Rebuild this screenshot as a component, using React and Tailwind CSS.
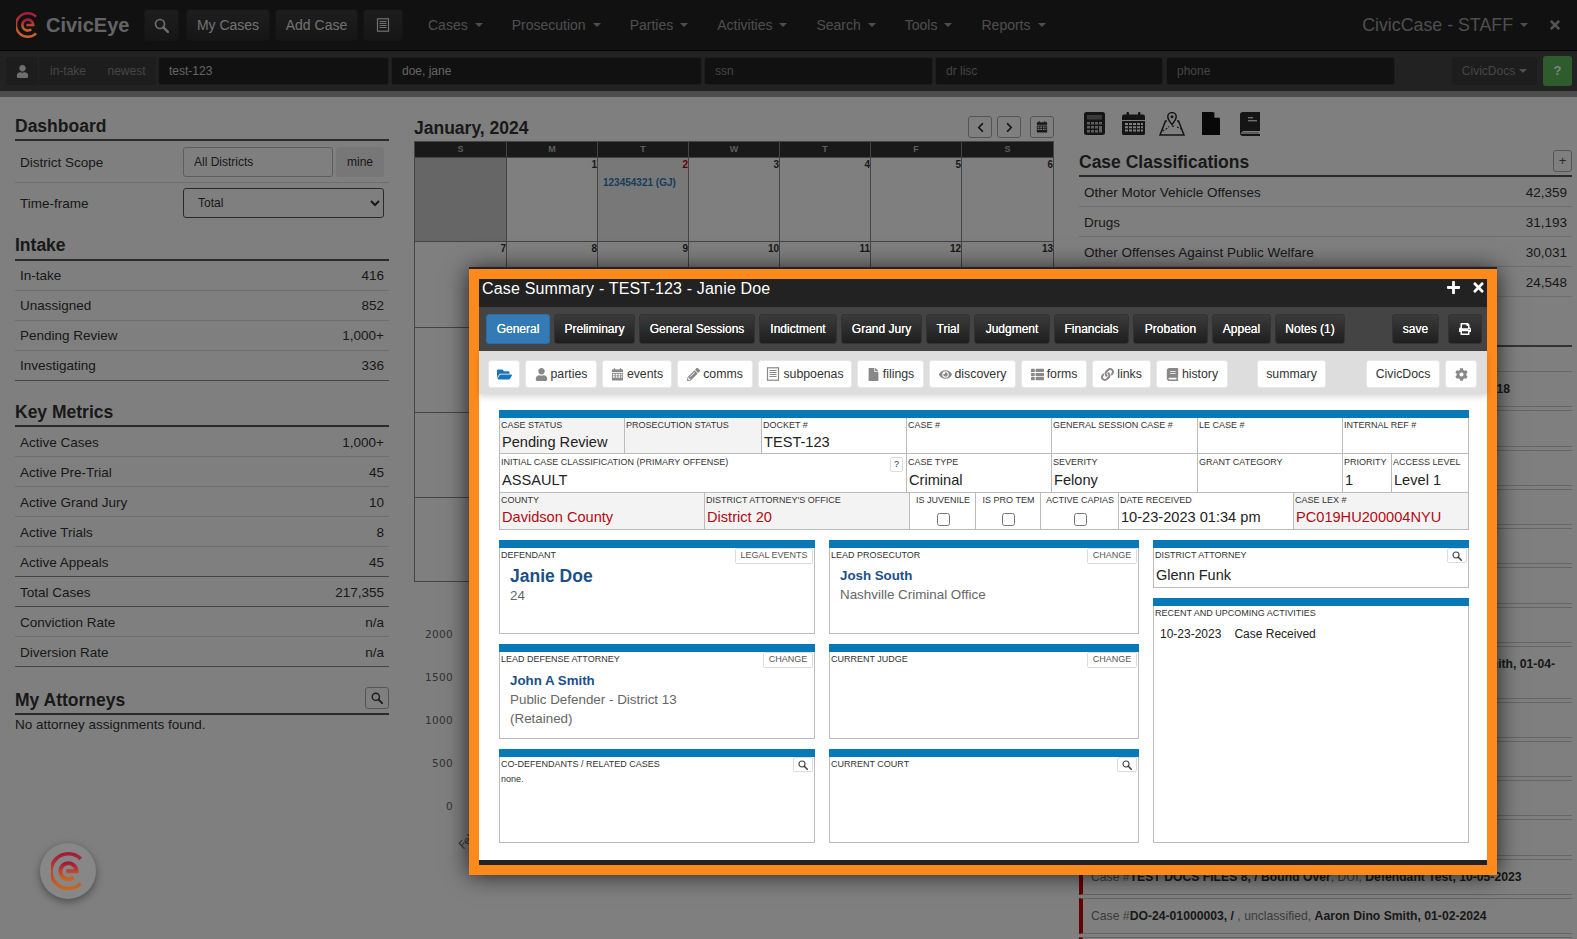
import React from "react";
import { FaUser, FaFolderOpen, FaPencilAlt, FaFile, FaEye, FaThList, FaLink, FaBook, FaCog, FaPrint, FaChevronLeft, FaChevronRight, FaPlus, FaTimes } from "react-icons/fa";

const Search = ({ s = 13, c = "#333" }) => (
  <svg width={s} height={s} viewBox="0 0 14 14" fill="none" stroke={c}>
    <circle cx="5.6" cy="5.6" r="4.2" strokeWidth="1.6" />
    <path d="M8.8 8.8 L13 13" strokeWidth="2.2" strokeLinecap="round" />
  </svg>
);
const ListAlt = ({ s = 14, c = "#888" }) => (
  <svg width={s} height={s} viewBox="0 0 14 14" fill="none" stroke={c}>
    <rect x="1.5" y="0.8" width="11" height="12.4" strokeWidth="1.2" />
    <path d="M3.5 3.5H10.5M3.5 5.5H10.5M3.5 7.5H10.5M3.5 9.5H10.5" strokeWidth="1.1" />
  </svg>
);
const CalSmall = ({ s = 13, c = "#888" }) => (
  <svg width={s} height={s} viewBox="0 0 14 14" fill={c}>
    <rect x="1" y="1.5" width="12" height="3" />
    <rect x="3" y="0.3" width="1.5" height="2" />
    <rect x="9.5" y="0.3" width="1.5" height="2" />
    <path d="M1 5.3H13V13.5H1Z M2 6.3V8H4V6.3Z M5 6.3V8H7V6.3Z M8 6.3V8H10V6.3Z M11 6.3V8H12.2V6.3Z M2 9V10.6H4V9Z M5 9V10.6H7V9Z M8 9V10.6H10V9Z M11 9V10.6H12.2V9Z" fillRule="evenodd" />
  </svg>
);
const Caret = ({ c = "border-t-[#9d9d9d]" }) => (
  <span className={"block w-0 h-0 border-x-4 border-x-transparent border-t-4 " + c} />
);

const Logo = ({ s = 24, id = "lg" }) => (
  <svg className="relative z-[1]" width={s} height={s * 1.13} viewBox="0 0 40 45" fill="none">
    <defs>
      <linearGradient id={id} x1="0" y1="0" x2="0" y2="1">
        <stop offset="0" stopColor="#a01c38" />
        <stop offset="0.5" stopColor="#bd4430" />
        <stop offset="1" stopColor="#c8661f" />
      </linearGradient>
    </defs>
    <path d="M35 8 A20.5 20.5 0 1 0 35 37" stroke={`url(#${id})`} strokeWidth="4.2" />
    <path d="M18 22.5 H30 A9.5 9.5 0 1 0 26.5 30" stroke={`url(#${id})`} strokeWidth="4.6" />
  </svg>
);

const navBtn = "h-8 rounded-[4px] bg-gradient-to-b from-[#3c3c3c] to-[#2c2c2c] border border-[#2a2a2a] flex items-center justify-center text-[14px] text-[#e0e0e0]";

function Header() {
  const items = ["Cases", "Prosecution", "Parties", "Activities", "Search", "Tools", "Reports"];
  return (
    <div className="h-[51px] bg-[#232323] border-b border-black flex items-center pl-4 pr-[15px]">
      <Logo s={23} id="lg1" />
      <span className="ml-[7px] w-[98px] text-[20px] font-bold text-[#c8c8c8] leading-none">CivicEye</span>
      <div className={navBtn + " w-[35px]"}><Search s={15} c="#d8d8d8" /></div>
      <div className={navBtn + " ml-[7px] w-[84px]"}>My Cases</div>
      <div className={navBtn + " ml-[5px] w-[83px]"}>Add Case</div>
      <div className={navBtn + " ml-[5px] w-[40px]"}><ListAlt s={14} c="#dedede" /></div>
      <div className="ml-[25px] flex items-center gap-[29px] text-[14px] text-[#9d9d9d]">
        {items.map((t) => (
          <span key={t} className="flex items-center gap-[7px]">{t}<Caret /></span>
        ))}
      </div>
      <div className="ml-auto flex items-center text-[17.8px] text-[#9d9d9d]">
        <span>CivicCase - STAFF</span>
        <span className="ml-[7px]"><Caret /></span>
        <FaTimes className="ml-[20px] text-[#a8a8a8] text-[14px]" />
      </div>
    </div>
  );
}

function SearchBar() {
  const inp = "h-7 rounded-[3px] bg-[#222] border border-[#3a3a3a] flex items-center pl-[10px] text-[12px]";
  const btn = "h-7 bg-[#3a3a3a] border border-[#3a3a3a] flex items-center justify-center text-[12px] text-[#8d8d8d]";
  return (
    <div className="h-10 bg-[#444] flex items-center pl-[6px] pr-[5px]">
      <div className={btn + " w-8 rounded-[3px]"}><FaUser className="text-[#ddd] text-[13px]" /></div>
      <div className={btn + " ml-[1px] w-[58px]"}>in-take</div>
      <div className={btn + " w-[59px]"}>newest</div>
      <div className={inp + " ml-[2px] w-[231px] text-[#c8c8c8]"}>test-123</div>
      <div className={inp + " ml-[2px] w-[311px] text-[#c8c8c8]"}>doe, jane</div>
      <div className={inp + " ml-[2px] w-[229px] text-[#8a8a8a]"}>ssn</div>
      <div className={inp + " ml-[2px] w-[228px] text-[#8a8a8a]"}>dr lisc</div>
      <div className={inp + " ml-[3px] w-[229px] text-[#8a8a8a]"}>phone</div>
      <div className={btn + " ml-auto w-[85px] rounded-[3px] gap-[4px]"}>CivicDocs<Caret c="border-t-[#a0a0a0]" /></div>
      <div className="ml-[6px] w-[29px] h-[30px] rounded-[3px] bg-[#5cb85c] flex items-center justify-center text-[13px] font-bold text-white">?</div>
    </div>
  );
}

const H = ({ children, right, h, pb = "pb-[3px]" }) => (
  <div className={h + " " + pb + " border-b-2 border-[#555] flex items-end justify-between text-[17.5px] leading-[20px] font-bold text-[#333]"}>
    <span>{children}</span>
    {right}
  </div>
);
const Row = ({ a, b, dark, pt = "pt-[1px]" }) => (
  <div className={"h-[30px] flex items-center justify-between px-[5px] border-b " + pt + " " + (dark ? "border-[#888]" : "border-[#ddd]")}>
    <span>{a}</span><span>{b}</span>
  </div>
);

function LeftCol() {
  const k = "pt-[3px]";
  return (
    <div className="w-[374px] ml-[15px] text-[13.5px] text-[#333]">
      <H h="h-[44px]">Dashboard</H>
      <div className="h-[42px] flex items-center justify-between pl-[5px] pr-[5px] border-b border-[#ddd]">
        <span className="mt-[4px]">District Scope</span>
        <div className="flex gap-[3px] text-[12px]">
          <div className="w-[150px] h-[30px] border border-[#bbb] rounded-[3px] flex items-center pl-[10px]">All Districts</div>
          <div className="w-[48px] h-[30px] bg-[#eee] rounded-[3px] flex items-center justify-center">mine</div>
        </div>
      </div>
      <div className="h-[41px] flex items-start justify-between pl-[5px] pr-[5px] pt-[5px]">
        <span className="leading-[30px] mt-[1px]">Time-frame</span>
        <select className="w-[201px] h-[30px] border border-[#555] rounded-[3px] pl-[10px] text-[12px] bg-white">
          <option>Total</option>
        </select>
      </div>
      <H h="h-[37px]" pb="pb-[4px]">Intake</H>
      <Row a="In-take" b="416" />
      <Row a="Unassigned" b="852" />
      <Row a="Pending Review" b="1,000+" />
      <Row a="Investigating" b="336" dark />
      <H h="h-[46px]">Key Metrics</H>
      <Row pt={k} a="Active Cases" b="1,000+" />
      <Row pt={k} a="Active Pre-Trial" b="45" />
      <Row pt={k} a="Active Grand Jury" b="10" />
      <Row pt={k} a="Active Trials" b="8" />
      <Row pt={k} a="Active Appeals" b="45" dark />
      <Row pt={k} a="Total Cases" b="217,355" dark />
      <Row pt={k} a="Conviction Rate" b="n/a" />
      <Row pt={k} a="Diversion Rate" b="n/a" dark />
      <H h="h-[48px]" right={<div className="w-6 h-[22px] mb-[1px] border border-[#aaa] rounded-[3px] flex items-center justify-center"><Search s={12} /></div>}>My Attorneys</H>
      <div className="leading-[18px] pt-[1px]">No attorney assignments found.</div>
    </div>
  );
}

function Calendar() {
  const days = ["S", "M", "T", "W", "T", "F", "S"];
  const rows = [
    ["", "1", "2", "3", "4", "5", "6"],
    ["7", "8", "9", "10", "11", "12", "13"],
    ["", "", "", "", "", "", ""],
    ["", "", "", "", "", "", ""],
    ["", "", "", "", "", "", ""],
  ];
  const hs = ["h-[84px]", "h-[86px]", "h-[85px]", "h-[85px]", "h-[84px]"];
  const cols = "grid grid-cols-[92px_repeat(6,1fr)]";
  return (
    <div className="w-[640px] ml-[25px] text-[#333]">
      <div className="h-[44px] flex items-end justify-between pb-[3px]">
        <span className="text-[17.5px] font-bold leading-[22px] -mb-[1px]">January, 2024</span>
        <div className="flex gap-[5px] items-center">
          <div className="w-6 h-[22px] border border-[#aaa] rounded-[3px] flex items-center justify-center"><FaChevronLeft className="text-[11px]" /></div>
          <div className="w-6 h-[22px] border border-[#aaa] rounded-[3px] flex items-center justify-center"><FaChevronRight className="text-[11px]" /></div>
          <div className="ml-[4px] w-6 h-[22px] border border-[#aaa] rounded-[3px] flex items-center justify-center"><CalSmall s={12} c="#333" /></div>
        </div>
      </div>
      <div className="border border-[#888] border-b-0">
        <div className={cols + " h-[15px] bg-[#333]"}>
          {days.map((d, i) => (
            <div key={i} className="border-r border-[#888] last:border-r-0 text-center text-[9px] font-bold text-[#bbb] leading-[15px]">{d}</div>
          ))}
        </div>
        {rows.map((r, i) => (
          <div key={i} className={cols + " border-t border-b-0 border-[#888] " + hs[i]}>
            {r.map((d, j) => (
              <div key={j} className={"border-r border-[#888] last:border-r-0 text-right text-[10px] font-bold leading-[14px] " + (i === 0 && j === 0 ? "bg-[#ccc]" : i === 0 && j === 2 ? "bg-[#f0f0f0]" : "")}>
                <span className={i === 0 && j === 2 ? "text-[#c00]" : ""}>{d}</span>
                {i === 0 && j === 2 && <div className="text-left pl-[5px] mt-[4px] text-[10px] text-[#337ab7] whitespace-nowrap">123454321 (GJ)</div>}
              </div>
            ))}
          </div>
        ))}
        <div className="border-t border-[#888]" />
      </div>
      <div className="mt-[31px] w-[39px] text-right text-[10.5px] tracking-[0.3px] text-[#666] leading-[43px] font-['DejaVu_Sans',sans-serif]">
        <div>2000</div><div>1500</div><div>1000</div><div>500</div><div>0</div>
      </div>
      <div className="mt-[6px] ml-[45px] w-4 text-[11px] text-[#666] -rotate-45 font-['DejaVu_Sans',sans-serif]">Feb</div>
    </div>
  );
}

const Cls = ({ a, b }) => (
  <div className="h-[30px] flex items-center justify-between px-[5px] pt-[3px] border-b border-[#ddd]">
    <span>{a}</span><span>{b}</span>
  </div>
);

function TopIcons() {
  const c = "#2a2a2a";
  return (
    <div className="mt-[15px] h-[23px] pl-[5px] flex items-center">
      <svg width="21" height="23" viewBox="0 0 21 23">
        <rect width="21" height="23" rx="2.5" fill={c} />
        <rect x="3" y="3" width="15" height="4.5" fill="#777" />
        <path d="M3 10H6V12.5H3ZM7 10H10V12.5H7ZM11 10H14V12.5H11ZM15 10H18V12.5H15ZM3 14H6V16.5H3ZM7 14H10V16.5H7ZM11 14H14V16.5H11ZM15 14H18V20.5H15ZM3 18H6V20.5H3ZM7 18H10V20.5H7ZM11 18H14V20.5H11Z" fill="#bbb" />
      </svg>
      <svg className="ml-[17px]" width="23" height="23" viewBox="0 0 23 23">
        <path d="M0 4.5Q0 2.5 2 2.5H21Q23 2.5 23 4.5V8H0Z" fill={c} />
        <rect x="4.5" y="0" width="2.5" height="4" rx="1" fill={c} />
        <rect x="16" y="0" width="2.5" height="4" rx="1" fill={c} />
        <path fillRule="evenodd" fill={c} d="M0 9H23V21.5Q23 23 21 23H2Q0 23 0 21.5ZM3 11V13H6V11ZM7 11V13H10V11ZM11 11V13H14V11ZM15 11V13H18V11ZM19 11V13H21V11ZM3 14.3V16.3H6V14.3ZM7 14.3V16.3H10V14.3ZM11 14.3V16.3H14V14.3ZM15 14.3V16.3H18V14.3ZM19 14.3V16.3H21V14.3ZM3 17.6V19.6H6V17.6ZM7 17.6V19.6H10V17.6ZM11 17.6V19.6H14V17.6ZM15 17.6V19.6H18V17.6ZM19 17.6V19.6H21V17.6Z" />
      </svg>
      <svg className="ml-[14px]" width="26" height="24" viewBox="0 0 26 24" fill="none" stroke={c}>
        <path d="M8 9H6.5L1 23H25L19.5 9H18" strokeWidth="1.5" />
        <path d="M3.5 19L8 16.5L10 14.5M13 14.5L16.5 13.5M18 15L22.5 17" strokeWidth="1.2" strokeDasharray="2 1.5" />
        <path d="M13 12.5C13 12.5 8.8 7.5 8.8 4.8A4.2 4.2 0 0 1 17.2 4.8C17.2 7.5 13 12.5 13 12.5Z" strokeWidth="1.5" fill="#fff" />
        <circle cx="13" cy="4.8" r="1.5" fill={c} stroke="none" />
      </svg>
      <svg className="ml-[17px]" width="18" height="23" viewBox="0 0 18 23">
        <path d="M0 0H11L18 7V23H0Z" fill="#111" />
        <path d="M12 0L18 6H12Z" fill="#fff" />
        <path d="M12.2 0.2V6H18" stroke="#111" strokeWidth="0.6" fill="none" />
      </svg>
      <svg className="ml-[20px]" width="20" height="24" viewBox="0 0 20 24">
        <path d="M3 0H20V19H3.5Q2 19 2 20.5T3.5 22H20V24H3Q0 24 0 21V3Q0 0 3 0Z" fill={c} />
        <rect x="8" y="5" width="5" height="1.4" fill="#ddd" />
        <rect x="8" y="8" width="9" height="1.4" fill="#ddd" />
        <rect x="1" y="20" width="18" height="2" fill="#bbb" />
      </svg>
    </div>
  );
}

function CaseCard({ h = "h-[36.3px]", children }) {
  return (
    <div className={h + " mb-[3px] border-y border-l-4 border-y-[#ccc] border-l-[#c00] pl-[8px] pt-[8px] leading-[18px] text-[12.2px] text-[#777]"}>
      {children}
    </div>
  );
}

function RightCol() {
  const B = ({ children }) => <b className="text-[#333]">{children}</b>;
  return (
    <div className="w-[493px] ml-[25px] text-[13.5px] text-[#333]">
      <TopIcons />
      <H h="h-[42px]" right={<div className="w-[19px] h-[22px] border border-[#aaa] rounded-[3px] flex items-center justify-center font-normal text-[13px] text-[#555]">+</div>}>Case Classifications</H>
      <Cls a="Other Motor Vehicle Offenses" b="42,359" />
      <Cls a="Drugs" b="31,193" />
      <Cls a="Other Offenses Against Public Welfare" b="30,031" />
      <Cls a="" b="24,548" />
      <div className="h-[50px] border-b-2 border-[#666]" />
      <div className="h-[24px]" />
      <CaseCard>Case #<B>TEST DOCS FILE 7 / Bound Over</B>, DUI, <B>Defendant Test, 10-05-2018</B></CaseCard>
      {Array.from({ length: 6 }).map((_, i) => <CaseCard key={i} />)}
      <CaseCard h="h-[52.5px]">Case #<B>DO-24-01000004, / General Session</B>, unclassified, <B>Aaron Dino Smith, 01-04-<br />2024</B></CaseCard>
      {Array.from({ length: 4 }).map((_, i) => <CaseCard key={i} />)}
      <CaseCard>Case #<B>TEST DOCS FILES 8, / Bound Over</B>, DUI, <B>Defendant Test, 10-05-2023</B></CaseCard>
      <CaseCard>Case #<B>DO-24-01000003, / </B>, unclassified, <B>Aaron Dino Smith, 01-02-2024</B></CaseCard>
      <CaseCard />
    </div>
  );
}

const tabs = [
  ["General", "w-[64px]"], ["Preliminary", "w-[81px]"], ["General Sessions", "w-[116px]"], ["Indictment", "w-[78px]"],
  ["Grand Jury", "w-[81px]"], ["Trial", "w-[44px]"], ["Judgment", "w-[76px]"], ["Financials", "w-[75px]"],
  ["Probation", "w-[75px]"], ["Appeal", "w-[59px]"], ["Notes (1)", "w-[70px]"],
];
const tabCls = "h-[30px] rounded-[3px] flex items-center justify-center text-[12px] text-white border [text-shadow:0_0_0.6px_#fff] ";
const darkTab = "bg-gradient-to-b from-[#3b3b3b] to-[#1f1f1f] border-[#333]";

const Tool = ({ w, icon, children, cls = "" }) => (
  <div className={w + " h-[28px] rounded-[3px] bg-white border border-[#e8e8e8] flex items-center justify-center gap-[3px] text-[12.3px] text-[#333] " + cls}>
    {icon}{children}
  </div>
);

function Cell({ w, label, value, red, gray, pt = "pt-[2px]", mt = "mt-[2px]", children }) {
  return (
    <div className={w + " border-r border-b border-[#bbb] pl-[1px] overflow-hidden " + pt + " " + (gray ? "bg-[#f3f3f3]" : "bg-white")}>
      <div className="h-[11px] flex justify-between items-start text-[9px] leading-[11px] text-[#333] whitespace-nowrap">{label}{children}</div>
      {value && <div className={"pl-[1px] text-[14.6px] leading-[18px] whitespace-nowrap " + mt + " " + (red ? "text-[#b40a14]" : "text-[#222]")}>{value}</div>}
    </div>
  );
}
function Check({ w, label }) {
  return (
    <div className={w + " border-r border-b border-[#bbb] pl-[1px] flex flex-col items-center pt-[2px] text-[9px] leading-[11px] text-[#333] whitespace-nowrap"}>
      {label}
      <input type="checkbox" readOnly className="mt-[7px] w-[13px] h-[13px]" />
    </div>
  );
}

const SmallBtn = ({ w, children }) => (
  <div className={w + " h-[16px] border border-[#ddd] rounded-[2px] flex items-center justify-center text-[9px] text-[#555] bg-white shrink-0"}>{children}</div>
);
const SearchBtn = () => (
  <div className="w-[20px] h-[15px] border border-[#ddd] rounded-[2px] flex items-center justify-center bg-white"><Search s={10} c="#444" /></div>
);
const CardBox = ({ label, action, children, cls = "" }) => (
  <div className={"border-x border-b border-[#bbb] flex flex-col " + cls}>
    <div className="h-2 -mx-[1px] bg-[#0779b7]" />
    <div className="h-[16px] flex justify-between items-start">
      <span className="text-[9px] leading-[11px] pt-[2px] pl-[1px] text-[#333]">{label}</span>
      <div className="mr-[1px]">{action}</div>
    </div>
    {children}
  </div>
);

function Modal() {
  const gi = "text-[#888] text-[13px]";
  const P = "pl-[10px] text-[13.4px] leading-[19px] text-[#666]";
  const N = "pl-[10px] text-[13.3px] leading-[19px] font-bold text-[#1b4f8a]";
  return (
    <div className="absolute left-[469px] top-[269px] w-[1028px] h-[606px] border-[10px] border-[#fd8a1a] bg-white flex flex-col shadow-[0_-2px_0_#222,0_0_22px_rgba(0,0,0,0.75)]">
      <div className="h-[28px] bg-[#222] flex items-start justify-between pl-[3px] pr-[1px] text-white">
        <span className="text-[16px] tracking-[0.17px] leading-[18px] pt-[1px]">Case Summary - TEST-123 - Janie Doe</span>
        <span className="flex items-center gap-[10px] pt-[1px]"><FaPlus className="text-[15px]" /><FaTimes className="text-[15px]" /></span>
      </div>
      <div className="h-[44px] bg-[#444] flex items-center pl-[7px] pr-[5px] gap-[4px]">
        {tabs.map(([t, w], i) => (
          <div key={t} className={w + " " + tabCls + (i === 0 ? "bg-[#337ab7] border-[#2e6da4]" : darkTab)}>{t}</div>
        ))}
        <div className={"ml-auto w-[47px] " + tabCls + darkTab}>save</div>
        <div className={"ml-[5px] w-[34px] " + tabCls + darkTab}><FaPrint className="text-[12px]" /></div>
      </div>
      <div className="h-[43px] bg-[#ddd] flex items-start pt-[9px] pl-[9px] pr-[10px] gap-[5px] shadow-[0_3px_6px_rgba(0,0,0,0.15)] relative">
        <Tool w="w-[32px]" icon={<FaFolderOpen className="text-[#1b75bb] text-[15px]" />} />
        <Tool w="w-[72px]" icon={<FaUser className={gi} />}>parties</Tool>
        <Tool w="w-[70px]" icon={<CalSmall s={13} />}>events</Tool>
        <Tool w="w-[76px]" icon={<FaPencilAlt className={gi} />}>comms</Tool>
        <Tool w="w-[94px]" icon={<ListAlt s={14} />}>subpoenas</Tool>
        <Tool w="w-[67px]" icon={<FaFile className={gi} />}>filings</Tool>
        <Tool w="w-[87px]" icon={<FaEye className={gi} />}>discovery</Tool>
        <Tool w="w-[66px]" icon={<FaThList className={gi} />}>forms</Tool>
        <Tool w="w-[59px]" icon={<FaLink className={gi} />}>links</Tool>
        <Tool w="w-[72px]" icon={<FaBook className={gi} />}>history</Tool>
        <Tool w="w-[69px] ml-[24px]">summary</Tool>
        <Tool w="w-[74px] ml-auto">CivicDocs</Tool>
        <Tool w="w-[32px]" icon={<FaCog className={gi} />} />
      </div>
      <div className="flex-1 pt-[16px] pl-[20px]">
        <div className="w-[970px] h-2 bg-[#0779b7]" />
        <div className="w-[970px] border-l border-[#bbb]">
          <div className="flex h-[36px]">
            <Cell w="w-[125px]" gray label="CASE STATUS" value="Pending Review" />
            <Cell w="w-[137px]" gray label="PROSECUTION STATUS" />
            <Cell w="w-[145px]" label="DOCKET #" value="TEST-123" />
            <Cell w="w-[145px]" label="CASE #" />
            <Cell w="w-[146px]" label="GENERAL SESSION CASE #" />
            <Cell w="w-[145px]" label="LE CASE #" />
            <Cell w="w-[126px]" label="INTERNAL REF #" />
          </div>
          <div className="flex h-[39px]">
            <Cell w="w-[407px]" pt="pt-[3px]" mt="mt-[3px]" label="INITIAL CASE CLASSIFICATION (PRIMARY OFFENSE)" value="ASSAULT">
              <span className="w-[13px] h-[15px] mr-[3px] border border-[#ddd] rounded-[2px] flex items-center justify-center text-[9px] shrink-0">?</span>
            </Cell>
            <Cell w="w-[145px]" pt="pt-[3px]" mt="mt-[3px]" label="CASE TYPE" value="Criminal" />
            <Cell w="w-[146px]" pt="pt-[3px]" mt="mt-[3px]" label="SEVERITY" value="Felony" />
            <Cell w="w-[145px]" pt="pt-[3px]" mt="mt-[3px]" label="GRANT CATEGORY" />
            <Cell w="w-[49px]" pt="pt-[3px]" mt="mt-[3px]" label="PRIORITY" value="1" />
            <Cell w="w-[77px]" pt="pt-[3px]" mt="mt-[3px]" label="ACCESS LEVEL" value="Level 1" />
          </div>
          <div className="flex h-[37px]">
            <Cell w="w-[205px]" gray label="COUNTY" value="Davidson County" red />
            <Cell w="w-[205px]" gray label="DISTRICT ATTORNEY'S OFFICE" value="District 20" red />
            <Check w="w-[66px]" label="IS JUVENILE" />
            <Check w="w-[65px]" label="IS PRO TEM" />
            <Check w="w-[78px]" label="ACTIVE CAPIAS" />
            <Cell w="w-[175px]" label="DATE RECEIVED" value="10-23-2023 01:34 pm" />
            <Cell w="w-[175px]" gray label="CASE LEX #" value="PC019HU200004NYU" red />
          </div>
        </div>
        <div className="mt-[10px] w-[970px] h-[303px] grid grid-cols-[316px_310px_316px] grid-rows-[94px_95px_94px] gap-x-[14px] gap-y-[10px]">
          <CardBox label="DEFENDANT" action={<SmallBtn w="w-[78px]">LEGAL EVENTS</SmallBtn>}>
            <div className="pl-[10px] mt-[1px] text-[17.5px] leading-[22px] font-bold text-[#1b4f8a]">Janie Doe</div>
            <div className="pl-[10px] text-[13.4px] leading-[19px] text-[#666] -mt-[1px]">24</div>
          </CardBox>
          <CardBox label="LEAD PROSECUTOR" action={<SmallBtn w="w-[50px]">CHANGE</SmallBtn>}>
            <div className={N + " mt-[2px]"}>Josh South</div>
            <div className={P}>Nashville Criminal Office</div>
          </CardBox>
          <div className="row-span-3 flex flex-col gap-[10px]">
            <CardBox cls="h-[48px]" label="DISTRICT ATTORNEY" action={<SearchBtn />}>
              <div className="pl-[2px] mt-[1px] text-[14.5px] leading-[20px] text-[#222]">Glenn Funk</div>
            </CardBox>
            <CardBox cls="flex-1" label="RECENT AND UPCOMING ACTIVITIES">
              <div className="pl-[6px] mt-[4px] flex gap-[13px] text-[12px] leading-[16px] text-[#222]"><span>10-23-2023</span><span>Case Received</span></div>
            </CardBox>
          </div>
          <CardBox label="LEAD DEFENSE ATTORNEY" action={<SmallBtn w="w-[50px]">CHANGE</SmallBtn>}>
            <div className={N + " mt-[3px]"}>John A Smith</div>
            <div className={P}>Public Defender - District 13</div>
            <div className={P}>(Retained)</div>
          </CardBox>
          <CardBox label="CURRENT JUDGE" action={<SmallBtn w="w-[50px]">CHANGE</SmallBtn>} />
          <CardBox label="CO-DEFENDANTS / RELATED CASES" action={<SearchBtn />}>
            <div className="pl-[1px] text-[9px] leading-[11px] mt-[1px] text-[#333]">none.</div>
          </CardBox>
          <CardBox label="CURRENT COURT" action={<SearchBtn />} />
        </div>
      </div>
      <div className="h-[5px] bg-[#222]" />
    </div>
  );
}

export default function App() {
  return (
    <div className="relative w-[1577px] h-[939px] overflow-hidden bg-white font-['Liberation_Sans',Arial,sans-serif]">
      <Header />
      <SearchBar />
      <div className="h-[6px] bg-[#9a9a9a]" />
      <div className="flex h-[842px] overflow-hidden">
        <LeftCol />
        <Calendar />
        <RightCol />
      </div>
      <div className="absolute inset-0 bg-black/50" />
      <div className="absolute left-[40px] top-[843px] w-14 h-14 rounded-full bg-[#878787] shadow-[0_3px_8px_rgba(0,0,0,0.4)] flex items-center justify-center">
        <Logo s={34} id="lg2" />
      </div>
      <Modal />
    </div>
  );
}
